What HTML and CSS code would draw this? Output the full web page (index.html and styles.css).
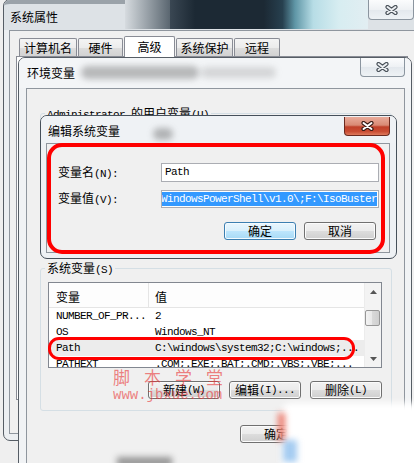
FILE: index.html
```html
<!DOCTYPE html>
<html>
<head>
<meta charset="utf-8">
<link rel="stylesheet" href="styles.css">
</head>
<body>
<div class="win win-a">
  <div class="titlebar tb-a">
    <span class="title">系统属性</span>
    <span class="close"><svg width="13" height="10" viewBox="0 0 13 10"><path d="M2.5 2 L10.5 8 M10.5 2 L2.5 8" stroke="#4a525a" stroke-width="4.2" stroke-linecap="round" fill="none"/><path d="M2.5 2 L10.5 8 M10.5 2 L2.5 8" stroke="#eef1f4" stroke-width="2" stroke-linecap="round" fill="none"/></svg></span>
  </div>
  <div class="client client-a">
    <div class="tabs">
      <div class="tab t1">计算机名</div>
      <div class="tab t2">硬件</div>
      <div class="tab t3 sel">高级</div>
      <div class="tab t4">系统保护</div>
      <div class="tab t5">远程</div>
    </div>
    <div class="tabpanel"></div>
  </div>
</div>

<div class="aero">
  <div class="glass g1"></div>
  <div class="glass g2"></div>
  <div class="glass g3"></div>
</div>

<div class="win win-b">
  <div class="titlebar tb-b">
    <span class="title">环境变量</span>
    <span class="smudge sm1"></span>
    <span class="smudge sm2"></span>
    <span class="close"><svg width="13" height="10" viewBox="0 0 13 10"><path d="M2.5 2 L10.5 8 M10.5 2 L2.5 8" stroke="#4a525a" stroke-width="4.2" stroke-linecap="round" fill="none"/><path d="M2.5 2 L10.5 8 M10.5 2 L2.5 8" stroke="#eef1f4" stroke-width="2" stroke-linecap="round" fill="none"/></svg></span>
  </div>
  <div class="client client-b">
    <fieldset class="group g-user"><legend><span class="m">Administrator </span>的用户变量<span class="m">(U)</span></legend></fieldset>
    <fieldset class="group g-sys">
      <legend>系统变量<span class="m">(S)</span></legend>
      <div class="list">
        <div class="cols">
          <div class="lhead"><span class="c1">变量</span><span class="c2">值</span></div>
          <div class="row"><span class="c1 m">NUMBER_OF_PR...</span><span class="c2 m">2</span></div>
          <div class="row"><span class="c1 m">OS</span><span class="c2 m">Windows_NT</span></div>
          <div class="row hl"><span class="c1 m">Path</span><span class="c2 m">C:\windows\system32;C:\windows;...</span></div>
          <div class="row"><span class="c1 m">PATHEXT</span><span class="c2 m">.COM;.EXE;.BAT;.CMD;.VBS;.VBE;...</span></div>
        </div>
        <div class="vscroll">
          <div class="sb-btn"><svg width="7" height="4" viewBox="0 0 7 4"><path d="M0 4 L3.5 0 L7 4Z" fill="#555"/></svg></div>
          <div class="sb-track"><div class="thumb"></div></div>
          <div class="sb-btn"><svg width="7" height="4" viewBox="0 0 7 4"><path d="M0 0 L3.5 4 L7 0Z" fill="#555"/></svg></div>
        </div>
      </div>
      <div class="btnrow sys-btns">
        <button class="btn">新建<span class="m">(W)</span></button>
        <button class="btn">编辑<span class="m">(I)...</span></button>
        <button class="btn">删除<span class="m">(L)</span></button>
      </div>
    </fieldset>
    <div class="btnrow dlg-btns">
      <button class="btn">确定</button>
      <button class="btn">取消</button>
    </div>
  </div>
</div>

<div class="win win-c">
  <div class="titlebar tb-c">
    <span class="title">编辑系统变量</span>
    <span class="smudge sm3"></span>
    <span class="close"><svg width="13" height="10" viewBox="0 0 13 10"><path d="M2.5 2 L10.5 8 M10.5 2 L2.5 8" stroke="#3a1c16" stroke-width="4.2" stroke-linecap="round" fill="none"/><path d="M2.5 2 L10.5 8 M10.5 2 L2.5 8" stroke="#ffffff" stroke-width="2" stroke-linecap="round" fill="none"/></svg></span>
  </div>
  <div class="client client-c">
    <div class="form">
      <span class="lbl">变量名<span class="m">(N):</span></span>
      <div class="input"><span class="m">Path</span></div>
      <span class="lbl">变量值<span class="m">(V):</span></span>
      <div class="input v"><span class="selected m">%SystemRoot%\system32\WindowsPowerShell\v1.0\;F:\IsoBuster</span></div>
    </div>
    <div class="btnrow c-btns">
      <button class="btn default">确定</button>
      <button class="btn">取消</button>
    </div>
  </div>
</div>

<div class="mark mark-c"></div>
<div class="mark mark-path"></div>

<div class="wm">
  <div class="wm-cn">脚本学堂</div>
  <div class="wm-en">www.jbxue.com</div>
</div>

<div class="fx fx-white"></div>
<div class="fx fx-red"></div>
<div class="fx fx-blue"></div>
<div class="fx fx-grey"></div>
</body>
</html>
```

FILE: styles.css
```css
* { box-sizing: border-box; }

body {
  margin: 0;
  width: 414px;
  height: 463px;
  position: relative;
  overflow: hidden;
  background: #efefef;
  font-family: "Noto Sans CJK SC", "Noto Sans", sans-serif;
  font-size: 12px;
  line-height: 1;
  color: #000;
}

.m {
  font-family: "Liberation Mono", "Noto Sans CJK SC", monospace;
  font-size: 11px;
  letter-spacing: -0.6px;
}

/* windows */
.win {
  position: absolute;
  display: flex;
  flex-direction: column;
  border: 1px solid #565d65;
  border-radius: 7px;
  background: #eceff2;
}
.win-a { left: 3px; top: -1px; width: 418px; height: 442px; }
.win-b { left: 18px; top: 57px; width: 394px; height: 420px; background: #f1f3f5; }
.win-c { left: 40px; top: 115px; width: 357px; height: 144px; border-color: #46505a; background: #eef1f4; }

.titlebar {
  display: flex;
  align-items: center;
  position: relative;
  flex: none;
  border-radius: 6px 6px 0 0;
}
.tb-a {
  height: 30px;
  padding-left: 6px;
  background-color: #dde2e6;
  border-top: 4px solid #9aa2a9;
}

/* aero glass seen through the title bar of the back window */
.aero {
  position: absolute;
  left: 125px;
  top: 0px;
  width: 243px;
  height: 29px;
  display: flex;
  background-color: #1c2934;
}
.glass { height: 29px; }
.g1 { width: 45px; background-color: #8a949d; background-image: linear-gradient(90deg, #d6dbdf, #5a6670); }
.g2 { width: 125px; background-color: #1c2934; background-image: linear-gradient(90deg, #3a4753, #1c2934 20%, #1c2934 75%, #27404f 90%, #5f96a6); }
.g3 { width: 73px; background-color: #b7dde6; background-image: linear-gradient(90deg, #5f96a6, #b7dde6 25%, #d7edf1 60%, #e2eef2); }

.tb-b { height: 30px; padding-left: 8px; background: #f3f5f7; }
.tb-c { height: 27px; padding-left: 7px; padding-top: 2px; background: #eff2f5; }

.close {
  align-self: flex-start;
  margin-left: auto;
  display: flex;
  align-items: center;
  justify-content: center;
  border: 1px solid #8b959f;
  border-top: none;
  border-radius: 0 0 4px 4px;
  background: linear-gradient(#fbfcfd, #eef1f4 50%, #e3e8ed 51%, #eef2f5);
}
.tb-a .close { width: 46px; height: 20px; margin-right: 6px; margin-top: -4px; }
.tb-b .close { width: 45px; height: 19px; margin-right: 6px; }
.tb-c .close {
  width: 46px;
  height: 19px;
  margin-right: 6px;
  margin-top: -1px;
  border-color: #6b2a1f;
  background: linear-gradient(#e9ab9a, #d98a75 45%, #c0402a 55%, #c94d33 80%, #de7a5c);
}

.smudge { position: absolute; border-radius: 8px; filter: blur(3px); }
.sm1 { left: 62px; top: 8px; width: 118px; height: 13px; background: rgba(60,60,60,0.33); }
.sm2 { left: 182px; top: 9px; width: 75px; height: 11px; background: rgba(90,90,90,0.2); }
.sm3 { left: 112px; top: 12px; width: 20px; height: 12px; background: rgba(60,60,60,0.35); }

.client {
  flex: 1;
  border: 1px solid #8f969e;
  background: #f0f0f0;
  display: flex;
  flex-direction: column;
}

/* window A */
.client-a { margin: 0 5px 6px 5px; padding-top: 5px; }
.tabs {
  display: flex;
  align-items: flex-end;
  gap: 1px;
  margin-left: 9px;
  position: relative;
  z-index: 1;
}
.tab {
  height: 18px;
  border: 1px solid #898c95;
  border-bottom: none;
  border-radius: 2px 2px 0 0;
  background: linear-gradient(#f4f4f4, #ececec 50%, #dedede 50%, #d2d2d2);
  display: flex;
  align-items: center;
  justify-content: center;
}
.t1 { width: 58px; }
.t2 { width: 45px; }
.t3 { width: 51px; }
.t4 { width: 57px; }
.t5 { width: 46px; }
.tab.sel { height: 21px; margin-bottom: -1px; background: #fff; }
.tabpanel {
  margin: 0 6px 0 6px;
  height: 344px;
  border: 1px solid #898c95;
  background: #fff;
}

/* window B */
.client-b { margin: 0 6px 0 7px; padding: 0 12px 0 13px; }
.group {
  margin: 0;
  border: 1px solid #d5dfe5;
  border-radius: 3px;
  padding: 7px 9px 11px 7px;
  min-width: 0;
}
.group legend {
  padding: 0 2px;
  margin-left: -3px;
  height: 14px;
  line-height: 14px;
}
.g-user { margin-top: 17px; height: 149px; }
.g-sys { margin-top: 6px; }

.list {
  height: 86px;
  border: 1px solid #828790;
  background: #fff;
  display: flex;
}
.cols { flex: 1; overflow: hidden; }
.lhead {
  height: 25px;
  display: flex;
  border-bottom: 1px solid #e5e5e5;
  background: #fdfdfd;
}
.lhead .c1 {
  width: 100px;
  border-right: 1px solid #e5e5e5;
  padding: 3px 0 0 7px;
  display: flex;
  align-items: center;
}
.lhead .c2 { padding: 3px 0 0 6px; display: flex; align-items: center; }
.row { height: 16px; display: flex; align-items: center; white-space: nowrap; }
.row .c1 { width: 100px; padding-left: 7px; }
.row .c2 { padding-left: 6px; }
.row.hl { background: #ececec; }

.vscroll {
  width: 17px;
  display: flex;
  flex-direction: column;
  background: #f3f3f3;
  border-left: 1px solid #ececec;
}
.sb-btn { height: 17px; display: flex; align-items: center; justify-content: center; }
.sb-track { flex: 1; padding: 10px 1px 0 0; }
.thumb {
  height: 16px;
  border: 1px solid #979797;
  border-radius: 2px;
  background: linear-gradient(to right, #f3f3f3, #e8e8e8 50%, #d9d9d9 50%, #cfcfcf);
}

.btnrow { display: flex; justify-content: flex-end; }
.sys-btns { margin-top: 13px; gap: 9px; }
.dlg-btns { margin-top: 14px; gap: 8px; }

.btn {
  width: 72px;
  height: 18px;
  padding: 0;
  margin: 0;
  border: 1px solid #707070;
  border-radius: 3px;
  background: linear-gradient(#f2f2f2 0%, #ebebeb 50%, #dddddd 50%, #cfcfcf 100%);
  box-shadow: inset 0 0 0 1px #fbfbfb;
  font-family: inherit;
  font-size: 12px;
  line-height: 1;
  color: #000;
  display: flex;
  align-items: center;
  justify-content: center;
}
.btn.default {
  border-color: #3c7fb1;
  background: linear-gradient(#eaf6fd 0%, #d9f0fc 50%, #bee6fd 50%, #a7d9f5 100%);
  box-shadow: inset 0 0 0 1px #f4fbff;
}

/* window C */
.client-c { margin: 0 6px 5px 5px; padding: 19px 10px 0 11px; }
.form {
  display: grid;
  grid-template-columns: 103px 218px;
  row-gap: 8px;
  align-items: center;
}
.input {
  height: 19px;
  border: 1px solid #abadb3;
  background: #fff;
  padding-left: 3px;
  display: flex;
  align-items: center;
  overflow: hidden;
}
.input.v { height: 18px; padding: 0 1px; justify-content: flex-end; }
.input.v .selected {
  flex: none;
  white-space: nowrap;
  background: #3399ff;
  color: #fff;
  height: 14px;
  display: flex;
  align-items: center;
}
.c-btns { margin-top: 14px; padding-right: 3px; gap: 8px; }

/* annotations */
.mark { position: absolute; border: 4px solid #ff0000; }
.mark-c { left: 47px; top: 143px; width: 338px; height: 111px; border-radius: 15px; }
.mark-path { left: 48px; top: 337px; width: 307px; height: 23px; border-width: 3px; border-radius: 11px; }

.wm {
  position: absolute;
  left: 113px;
  top: 368px;
  color: rgba(232, 50, 50, 0.6);
}
.wm-cn { font-size: 17px; letter-spacing: 14px; white-space: nowrap; }
.wm-en { font-family: "Liberation Mono", monospace; font-size: 14px; margin-top: 3px; }

.fx { position: absolute; filter: blur(3px); }
.fx-white { left: 281px; top: 403px; width: 150px; height: 75px; background: #fff; border-radius: 10px; }
.fx-red { left: 278px; top: 413px; width: 7px; height: 28px; background: rgba(230,70,50,0.7); }
.fx-blue { left: 283px; top: 440px; width: 14px; height: 22px; background: rgba(90,160,230,0.55); }
.fx-grey { left: 117px; top: 457px; width: 55px; height: 10px; background: rgba(90,90,90,0.6); }
```
